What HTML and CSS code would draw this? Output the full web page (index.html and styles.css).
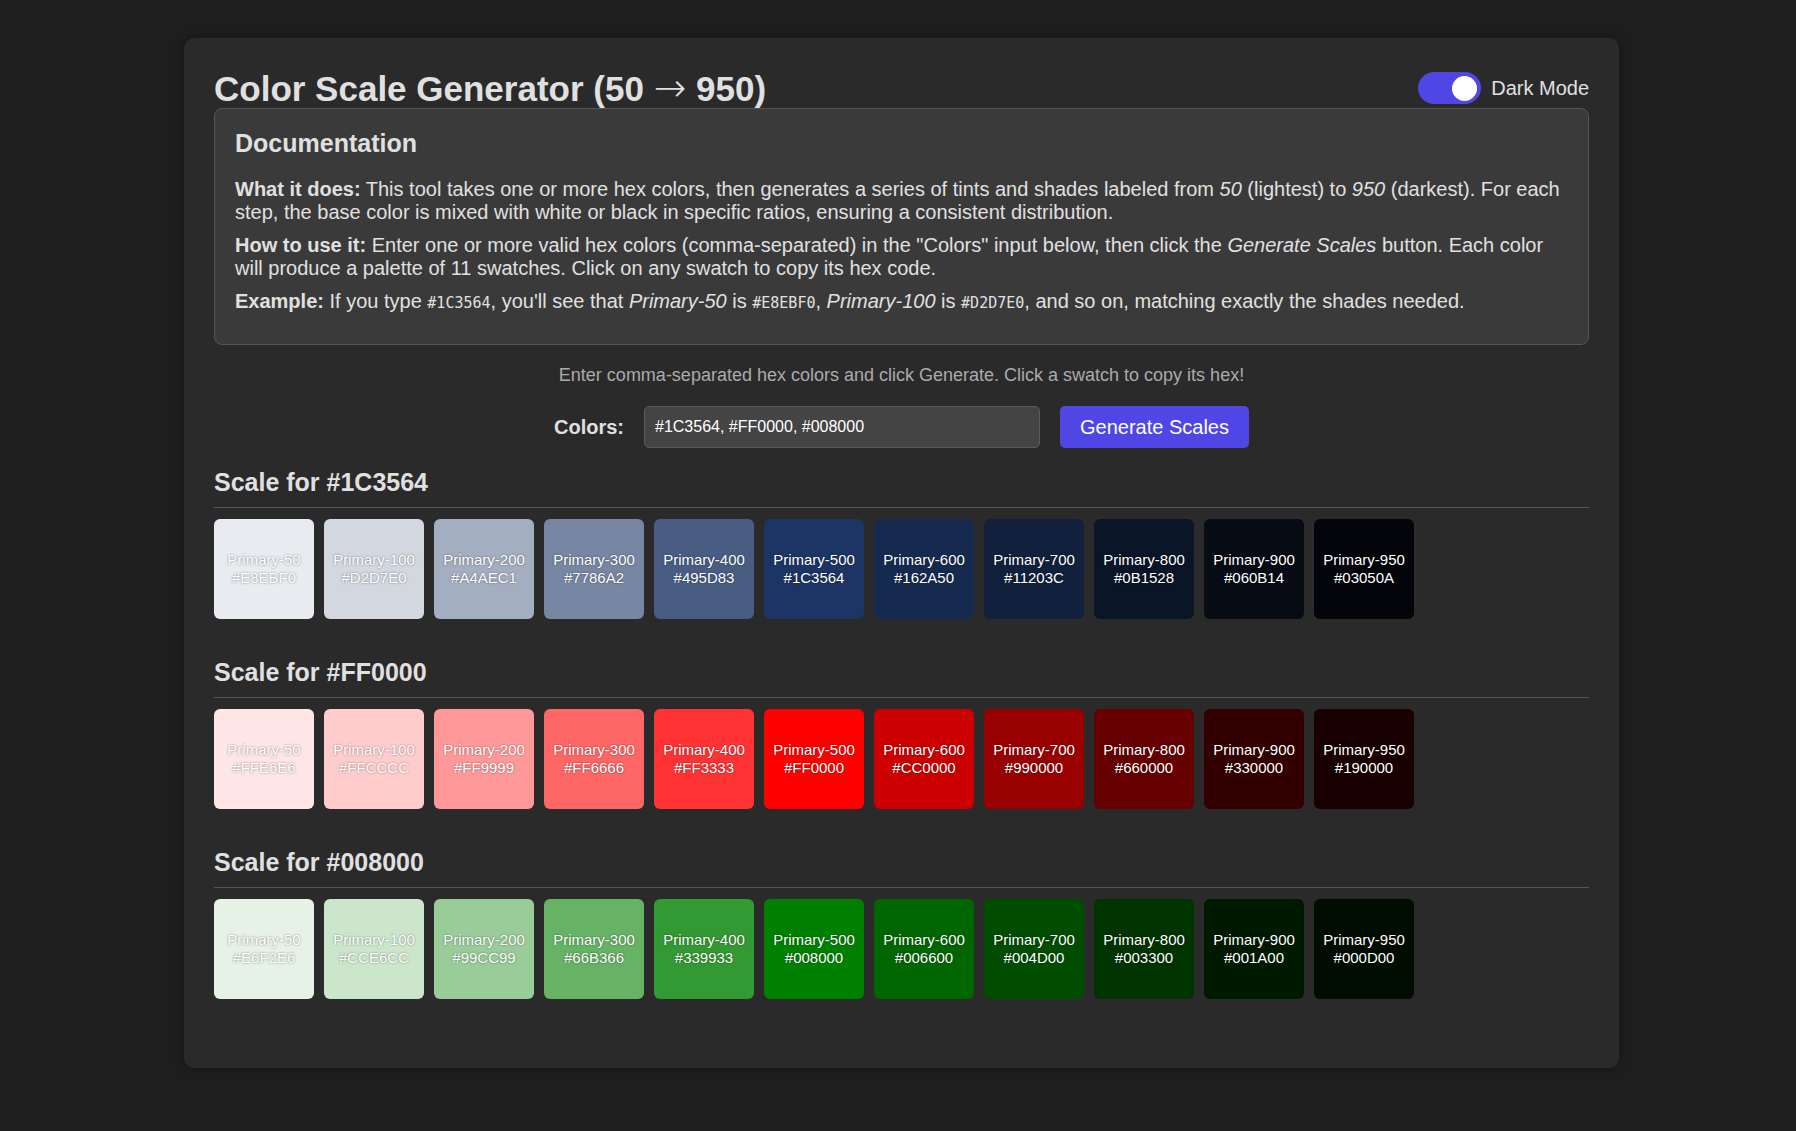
FILE: index.html
```html
<!DOCTYPE html>
<html lang="en">
<head>
<meta charset="utf-8">
<title>Color Scale Generator</title>
<link rel="stylesheet" href="styles.css">
</head>
<body>
<div class="app">
  <header class="app-header">
    <h1 class="title">Color Scale Generator (50 <span class="arrow">→</span> 950)</h1>
    <div class="mode">
      <div class="toggle"><span class="knob"></span></div>
      <span class="mode-label">Dark Mode</span>
    </div>
  </header>

  <section class="docs">
    <h2 class="docs-title">Documentation</h2>
    <p><strong>What it does:</strong> This tool takes one or more hex colors, then generates a series of tints and shades labeled from <em>50</em> (lightest) to <em>950</em> (darkest). For each step, the base color is mixed with white or black in specific ratios, ensuring a consistent distribution.</p>
    <p><strong>How to use it:</strong> Enter one or more valid hex colors (comma-separated) in the "Colors" input below, then click the <em>Generate Scales</em> button. Each color will produce a palette of 11 swatches. Click on any swatch to copy its hex code.</p>
    <p><strong>Example:</strong> If you type <code>#1C3564</code>, you'll see that <em>Primary-50</em> is <code>#E8EBF0</code>, <em>Primary-100</em> is <code>#D2D7E0</code>, and so on, matching exactly the shades needed.</p>
  </section>

  <p class="hint">Enter comma-separated hex colors and click Generate. Click a swatch to copy its hex!</p>

  <div class="controls">
    <label class="controls-label" for="colors">Colors:</label>
    <input class="colors-input" id="colors" type="text" value="#1C3564, #FF0000, #008000">
    <button class="btn" type="button">Generate Scales</button>
  </div>

  <section class="scale">
    <h2 class="scale-title">Scale for #1C3564</h2>
    <div class="swatches">
      <div class="swatch" style="background:#E8EBF0"><span>Primary-50</span><span>#E8EBF0</span></div>
      <div class="swatch" style="background:#D2D7E0"><span>Primary-100</span><span>#D2D7E0</span></div>
      <div class="swatch" style="background:#A4AEC1"><span>Primary-200</span><span>#A4AEC1</span></div>
      <div class="swatch" style="background:#7786A2"><span>Primary-300</span><span>#7786A2</span></div>
      <div class="swatch" style="background:#495D83"><span>Primary-400</span><span>#495D83</span></div>
      <div class="swatch" style="background:#1C3564"><span>Primary-500</span><span>#1C3564</span></div>
      <div class="swatch" style="background:#162A50"><span>Primary-600</span><span>#162A50</span></div>
      <div class="swatch" style="background:#11203C"><span>Primary-700</span><span>#11203C</span></div>
      <div class="swatch" style="background:#0B1528"><span>Primary-800</span><span>#0B1528</span></div>
      <div class="swatch" style="background:#060B14"><span>Primary-900</span><span>#060B14</span></div>
      <div class="swatch" style="background:#03050A"><span>Primary-950</span><span>#03050A</span></div>
    </div>
  </section>

  <section class="scale">
    <h2 class="scale-title">Scale for #FF0000</h2>
    <div class="swatches">
      <div class="swatch" style="background:#FFE6E6"><span>Primary-50</span><span>#FFE6E6</span></div>
      <div class="swatch" style="background:#FFCCCC"><span>Primary-100</span><span>#FFCCCC</span></div>
      <div class="swatch" style="background:#FF9999"><span>Primary-200</span><span>#FF9999</span></div>
      <div class="swatch" style="background:#FF6666"><span>Primary-300</span><span>#FF6666</span></div>
      <div class="swatch" style="background:#FF3333"><span>Primary-400</span><span>#FF3333</span></div>
      <div class="swatch" style="background:#FF0000"><span>Primary-500</span><span>#FF0000</span></div>
      <div class="swatch" style="background:#CC0000"><span>Primary-600</span><span>#CC0000</span></div>
      <div class="swatch" style="background:#990000"><span>Primary-700</span><span>#990000</span></div>
      <div class="swatch" style="background:#660000"><span>Primary-800</span><span>#660000</span></div>
      <div class="swatch" style="background:#330000"><span>Primary-900</span><span>#330000</span></div>
      <div class="swatch" style="background:#190000"><span>Primary-950</span><span>#190000</span></div>
    </div>
  </section>

  <section class="scale">
    <h2 class="scale-title">Scale for #008000</h2>
    <div class="swatches">
      <div class="swatch" style="background:#E6F2E6"><span>Primary-50</span><span>#E6F2E6</span></div>
      <div class="swatch" style="background:#CCE6CC"><span>Primary-100</span><span>#CCE6CC</span></div>
      <div class="swatch" style="background:#99CC99"><span>Primary-200</span><span>#99CC99</span></div>
      <div class="swatch" style="background:#66B366"><span>Primary-300</span><span>#66B366</span></div>
      <div class="swatch" style="background:#339933"><span>Primary-400</span><span>#339933</span></div>
      <div class="swatch" style="background:#008000"><span>Primary-500</span><span>#008000</span></div>
      <div class="swatch" style="background:#006600"><span>Primary-600</span><span>#006600</span></div>
      <div class="swatch" style="background:#004D00"><span>Primary-700</span><span>#004D00</span></div>
      <div class="swatch" style="background:#003300"><span>Primary-800</span><span>#003300</span></div>
      <div class="swatch" style="background:#001A00"><span>Primary-900</span><span>#001A00</span></div>
      <div class="swatch" style="background:#000D00"><span>Primary-950</span><span>#000D00</span></div>
    </div>
  </section>
</div>
</body>
</html>
```

FILE: styles.css
```css
* { box-sizing: border-box; }

html, body {
  margin: 0;
  padding: 0;
  background: #1e1e1e;
}

body {
  font-family: "Liberation Sans", Arial, sans-serif;
  font-size: 20px;
  color: #e0e0e0;
  padding: 38px 0 0 7px;
}

.app {
  width: 1435px;
  margin: 0 auto 40px;
  padding: 30px 30px 30px;
  background: #2a2a2a;
  border-radius: 10px;
  box-shadow: 0 0 12px rgba(0, 0, 0, 0.35);
}

.app-header {
  display: flex;
  justify-content: space-between;
  align-items: center;
  height: 40px;
}

.title {
  margin: 0;
  font-size: 35px;
  font-weight: bold;
  color: #e0e0e0;
  white-space: nowrap;
}

.arrow {
  font-family: "DejaVu Sans", sans-serif;
  font-weight: 200;
  font-size: 39px;
  line-height: 1;
}

.mode {
  display: flex;
  align-items: center;
  gap: 10px;
}

.toggle {
  width: 63px;
  height: 32px;
  border-radius: 16px;
  background: #4f46e5;
  display: flex;
  align-items: center;
  justify-content: flex-end;
  padding: 0 4px;
}

.knob {
  width: 25px;
  height: 25px;
  border-radius: 50%;
  background: #ffffff;
}

.mode-label {
  font-size: 20px;
  color: #e0e0e0;
}

.docs {
  background: #3a3a3a;
  border: 1px solid #555;
  border-radius: 8px;
  padding: 20px;
}

.docs-title {
  margin: 0 0 20px;
  font-size: 25px;
  font-weight: bold;
}

.docs p {
  margin: 10px 0;
  line-height: 23px;
}

.docs p:last-child {
  margin-bottom: 9px;
}

.docs code {
  font-family: "DejaVu Sans Mono", "Liberation Mono", monospace;
  font-size: 15px;
}

.hint {
  margin: 20px 0;
  text-align: center;
  font-size: 18px;
  color: #aaaaaa;
}

.controls {
  display: flex;
  justify-content: center;
  align-items: center;
  gap: 20px;
  margin-bottom: 20px;
}

.controls-label {
  font-weight: bold;
  font-size: 20px;
}

.colors-input {
  width: 396px;
  height: 42px;
  padding: 0 10px;
  font-family: "Liberation Sans", Arial, sans-serif;
  font-size: 16px;
  color: #ffffff;
  background: #444444;
  border: 1px solid #5a5a5a;
  border-radius: 5px;
}

.btn {
  height: 42px;
  padding: 0 20px;
  font-family: "Liberation Sans", Arial, sans-serif;
  font-size: 20px;
  color: #ffffff;
  background: #4f46e5;
  border: none;
  border-radius: 5px;
}

.scale {
  margin-bottom: 39px;
}

.scale-title {
  margin: 0 0 11px;
  padding-bottom: 10px;
  border-bottom: 1px solid #555;
  font-size: 25px;
  font-weight: bold;
}

.swatches {
  display: flex;
  gap: 10px;
}

.swatch {
  width: 100px;
  height: 100px;
  border-radius: 6px;
  display: flex;
  flex-direction: column;
  align-items: center;
  justify-content: center;
  font-size: 15px;
  line-height: 18px;
  color: #ffffff;
  text-shadow: 0 0 2px rgba(0, 0, 0, 0.5);
}
```
